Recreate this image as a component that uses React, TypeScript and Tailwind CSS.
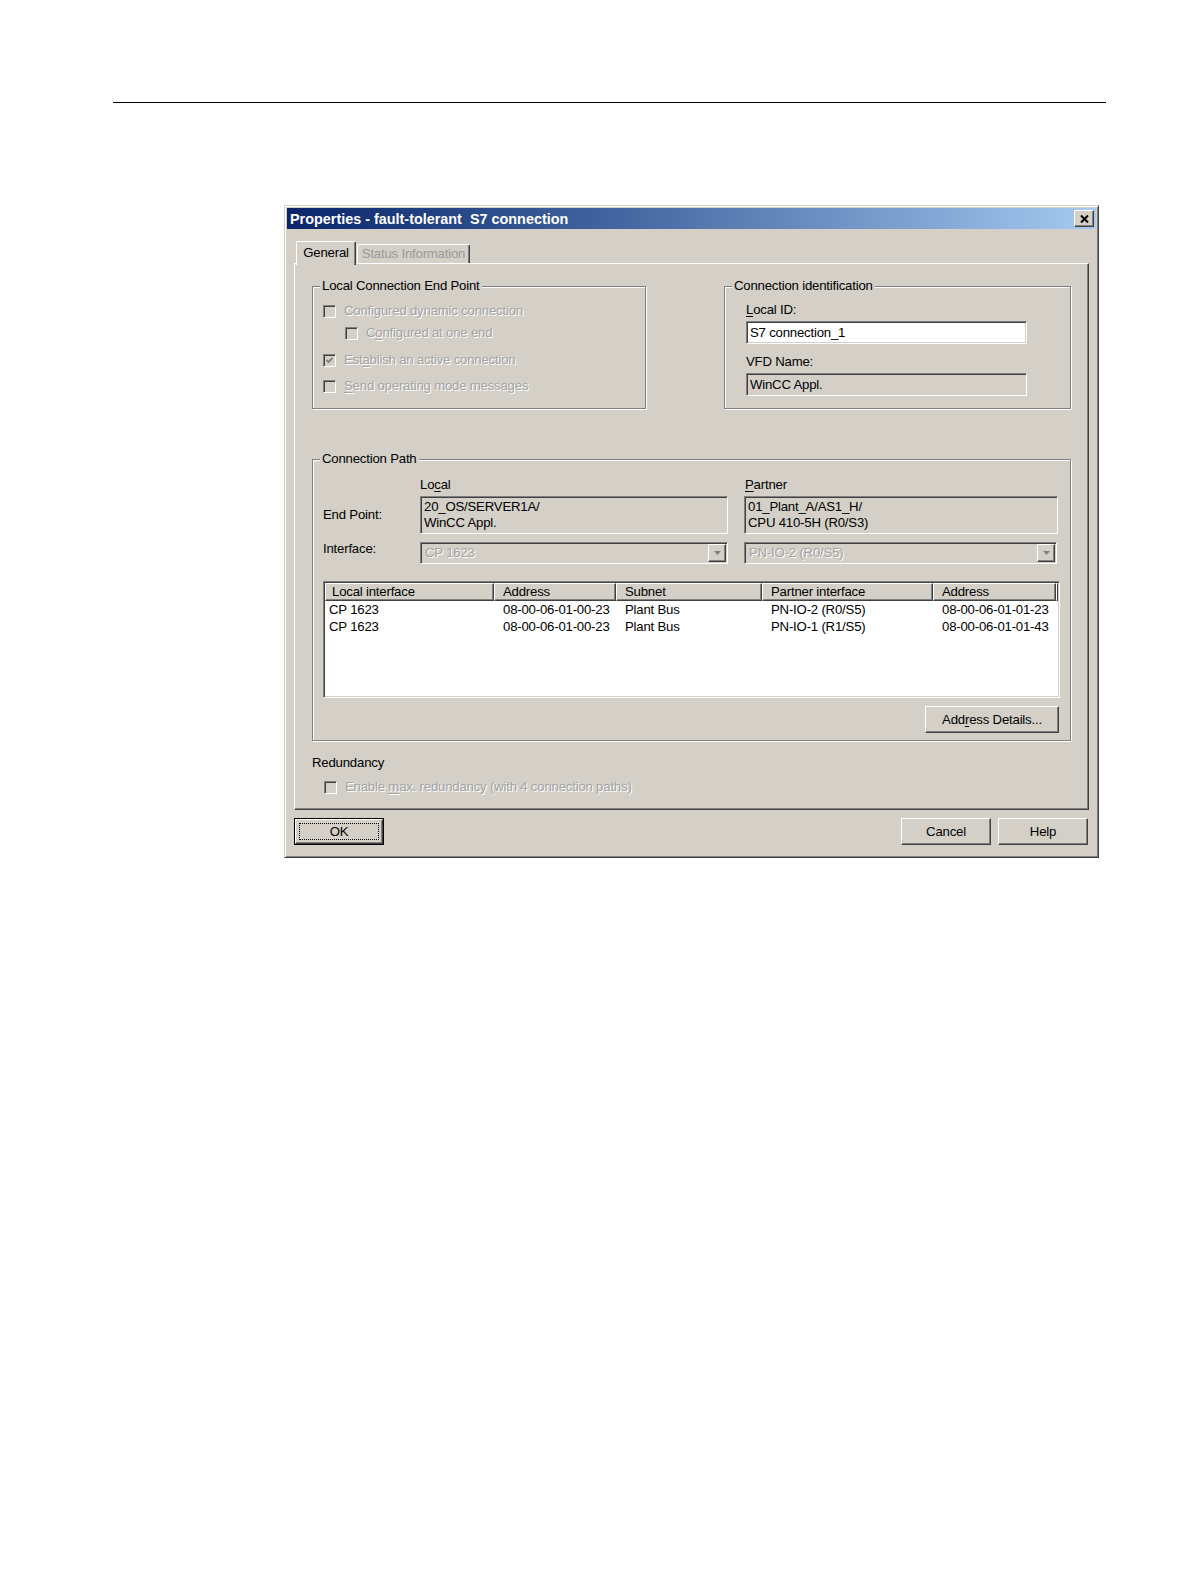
import React from "react";

// classic win32 bevels
const raised =
  "border border-t-white border-l-white border-r-[#404040] border-b-[#404040] shadow-[inset_-1px_-1px_0_#808080]";
const sunken =
  "border border-t-[#808080] border-l-[#808080] border-r-white border-b-white shadow-[inset_1px_1px_0_#404040,inset_-1px_-1px_0_#d4d0c8]";
const etched = "border border-[#808080] shadow-[inset_1px_1px_0_#ffffff,1px_1px_0_#ffffff]";
const dim = "text-[#a3a3a3] [text-shadow:1px_1px_0_#ffffff]";

function U({ children }: { children: React.ReactNode }) {
  return <span className="underline decoration-1 underline-offset-[2px]">{children}</span>;
}

function Check({ checked }: { checked?: boolean }) {
  return (
    <span className={`flex h-[13px] w-[13px] shrink-0 items-center justify-center bg-[#d4d0c8] ${sunken}`}>
      {checked && (
        <svg viewBox="0 0 9 9" width="9" height="9">
          <path d="M1.5 4 L3.5 6 L7.5 2" fill="none" stroke="#808080" strokeWidth="1.8" />
        </svg>
      )}
    </span>
  );
}

function CheckRow({ checked, children, className = "" }: { checked?: boolean; children: React.ReactNode; className?: string }) {
  return (
    <div className={`flex h-[16px] items-center gap-[8px] ${className}`}>
      <Check checked={checked} />
      <span className={dim}>{children}</span>
    </div>
  );
}

// etched group box; padding goes on the inner div so the legend stays put
function Group({ label, className = "", inner = "", children }: { label: string; className?: string; inner?: string; children: React.ReactNode }) {
  return (
    <fieldset className={`${etched} ${className}`}>
      <legend className="ml-[7px] bg-[#d4d0c8] px-[2px] leading-[16px]">{label}</legend>
      <div className={inner}>{children}</div>
    </fieldset>
  );
}

function Combo({ value, w }: { value: string; w: string }) {
  return (
    <div className={`flex h-[22px] items-center bg-[#d4d0c8] p-px ${sunken} ${w}`}>
      <span className={`flex-1 pl-[3px] ${dim}`}>{value}</span>
      <span className={`flex h-[18px] w-[18px] items-center justify-center bg-[#d4d0c8] ${raised}`}>
        <svg viewBox="0 0 7 4" width="7" height="4">
          <path d="M0 0 H7 L3.5 4 Z" fill="#808080" />
        </svg>
      </span>
    </div>
  );
}

function Button({ children, w = "w-[90px]", isDefault }: { children: React.ReactNode; w?: string; isDefault?: boolean }) {
  if (isDefault) {
    return (
      <div className={`h-[27px] border border-black ${w}`}>
        <div className={`flex h-full items-center justify-center bg-[#d4d0c8] p-[3px] ${raised}`}>
          <span className="flex h-full w-full items-center justify-center border border-dotted border-black">{children}</span>
        </div>
      </div>
    );
  }
  return <div className={`flex h-[27px] items-center justify-center bg-[#d4d0c8] ${raised} ${w}`}>{children}</div>;
}

const cols = [
  { label: "Local interface", w: "w-[169px]", hp: "pl-[6px]", rp: "pl-[4px]" },
  { label: "Address", w: "w-[122px]", hp: "pl-[8px]", rp: "pl-[9px]" },
  { label: "Subnet", w: "w-[146px]", hp: "pl-[8px]", rp: "pl-[9px]" },
  { label: "Partner interface", w: "w-[171px]", hp: "pl-[8px]", rp: "pl-[9px]" },
  { label: "Address", w: "w-[123px]", hp: "pl-[8px]", rp: "pl-[9px]" },
];

const rows = [
  ["CP 1623", "08-00-06-01-00-23", "Plant Bus", "PN-IO-2 (R0/S5)", "08-00-06-01-01-23"],
  ["CP 1623", "08-00-06-01-00-23", "Plant Bus", "PN-IO-1 (R1/S5)", "08-00-06-01-01-43"],
];

export default function App() {
  return (
    <div className="bg-white pb-[40px] font-['Liberation_Sans',Arial,sans-serif] text-[13.2px] leading-[16px] tracking-[-0.2px] text-black">
      <div className="pt-[102px]">
        <div className="ml-[113px] h-px w-[993px] bg-black" />
      </div>

      <div className="ml-[284px] mt-[102px] h-[653px] w-[815px] border border-t-[#d4d0c8] border-l-[#d4d0c8] border-r-[#404040] border-b-[#404040] bg-[#d4d0c8] p-[2px] shadow-[inset_1px_1px_0_#ffffff,inset_-1px_-1px_0_#808080]">
        {/* title bar */}
        <div className="flex h-[21px] items-center justify-between bg-linear-to-r from-[#0a246a] to-[#a6caf0] pl-[3px] pr-[2px]">
          <span className="whitespace-pre text-[14.4px] font-bold tracking-[0px] text-white">Properties - fault-tolerant  S7 connection</span>
          <span className={`flex h-[17px] w-[20px] items-center justify-center bg-[#d4d0c8] ${raised}`}>
            <svg viewBox="0 0 9 8" width="9" height="8">
              <path d="M1 0.5 L8 7.5 M8 0.5 L1 7.5" stroke="#000" strokeWidth="2" />
            </svg>
          </span>
        </div>

        <div className="px-[7px] pt-[12px]">
          {/* tabs */}
          <div className="flex h-[22px] items-end pl-[2px]">
            <div className="relative z-10 -mb-[2px] flex h-[24px] w-[60px] items-start justify-center rounded-t-[2px] border-t border-l border-r border-t-white border-l-white border-r-[#404040] bg-[#d4d0c8] pt-[3px] shadow-[inset_-1px_0_0_#808080]">
              General
            </div>
            <div className="ml-[1px] flex h-[19px] w-[113px] items-center justify-center rounded-t-[2px] border-t border-l border-r border-t-white border-l-white border-r-[#404040] text-[#9a9a9a] shadow-[inset_-1px_0_0_#808080]">
              Status Information
            </div>
          </div>

          {/* tab panel */}
          <div className="h-[547px] border border-t-white border-l-white border-r-[#404040] border-b-[#404040] px-[17px] pt-[14px] shadow-[inset_-1px_-1px_0_#808080]">
            <div className="flex justify-between">
              <Group label="Local Connection End Point" className="w-[334px]" inner="pb-[14px] pl-[10px]">
                <CheckRow className="mt-[9px]">Configured dynamic connection</CheckRow>
                <CheckRow className="ml-[22px] mt-[6px]">
                  C<U>o</U>nfigured at one end
                </CheckRow>
                <CheckRow checked className="mt-[11px]">
                  Est<U>a</U>blish an active connection
                </CheckRow>
                <CheckRow className="mt-[10px]">
                  <U>S</U>end operating mode messages
                </CheckRow>
              </Group>

              <Group label="Connection identification" className="w-[347px]" inner="pb-[11px] pl-[21px]">
                <div className="mt-[8px] h-[16px]">
                  <U>L</U>ocal ID:
                </div>
                <div className={`mt-[3px] flex h-[23px] w-[281px] items-center bg-white pl-[3px] ${sunken}`}>S7 connection_1</div>
                <div className="mt-[10px] h-[16px]">VFD Name:</div>
                <div className={`mt-[3px] flex h-[23px] w-[281px] items-center bg-[#d4d0c8] pl-[3px] ${sunken}`}>WinCC Appl.</div>
              </Group>
            </div>

            <Group label="Connection Path" className="mt-[42px]" inner="pb-[7px] pl-[10px] pr-[10px]">
              <div className="mt-[10px] flex h-[16px]">
                <div className="w-[97px]" />
                <div className="w-[308px]">
                  Lo<U>c</U>al
                </div>
                <div className="ml-[17px]">
                  <U>P</U>artner
                </div>
              </div>
              <div className="mt-[3px] flex h-[38px] items-center">
                <div className="w-[97px]">End Point:</div>
                <div className={`h-[38px] w-[308px] bg-[#d4d0c8] px-[3px] pt-[2px] ${sunken}`}>
                  20_OS/SERVER1A/
                  <br />
                  WinCC Appl.
                </div>
                <div className={`ml-[16px] h-[38px] w-[314px] bg-[#d4d0c8] px-[3px] pt-[2px] ${sunken}`}>
                  01_Plant_A/AS1_H/
                  <br />
                  CPU 410-5H (R0/S3)
                </div>
              </div>
              <div className="mt-[8px] flex h-[22px] items-center">
                <div className="w-[97px] pb-[8px]">Interface:</div>
                <Combo value="CP 1623" w="w-[308px]" />
                <div className="ml-[16px]">
                  <Combo value="PN-IO-2 (R0/S5)" w="w-[313px]" />
                </div>
              </div>

              {/* list view */}
              <div className={`mt-[17px] h-[117px] w-[737px] bg-white p-px ${sunken}`}>
                <div className="flex h-[18px]">
                  {cols.map((c, i) => (
                    <div key={i} className={`flex h-[18px] items-center bg-[#d4d0c8] ${raised} ${c.w} ${c.hp}`}>
                      {c.label}
                    </div>
                  ))}
                  <div className={`h-[18px] flex-1 bg-[#d4d0c8] ${raised}`} />
                </div>
                {rows.map((r, i) => (
                  <div key={i} className="flex h-[17px] items-center leading-[17px]">
                    {r.map((cell, j) => (
                      <div key={j} className={`${cols[j].w} ${cols[j].rp}`}>
                        {cell}
                      </div>
                    ))}
                  </div>
                ))}
              </div>

              <div className="mt-[8px] flex justify-end pr-[1px]">
                <Button w="w-[134px]">
                  Add<U>r</U>ess Details...
                </Button>
              </div>
            </Group>

            <div className="mt-[14px] h-[16px]">Redundancy</div>
            <CheckRow className="mt-[8px] pl-[12px]">
              Enable <U>m</U>ax. redundancy (with 4 connection paths)
            </CheckRow>
          </div>

          {/* buttons */}
          <div className="mt-[8px] flex gap-[7px] pr-[1px]">
            <Button isDefault>OK</Button>
            <div className="ml-auto">
              <Button>Cancel</Button>
            </div>
            <Button>Help</Button>
          </div>
        </div>
      </div>
    </div>
  );
}
